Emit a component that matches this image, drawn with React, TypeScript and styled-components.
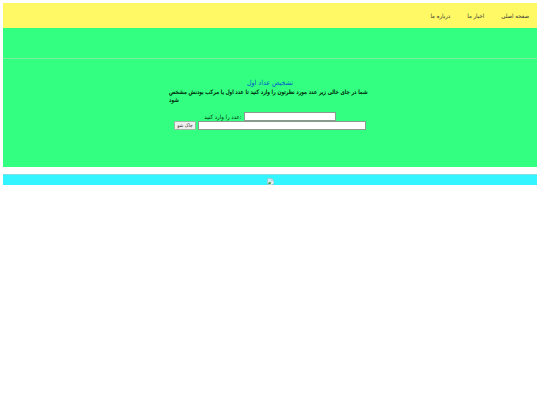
import React from "react";
import styled, { createGlobalStyle } from "styled-components";

const GlobalStyle = createGlobalStyle`
  * { box-sizing: border-box; }
  body {
    margin: 0;
    background: #fff;
    color: #000;
    font-family: "DejaVu Sans Condensed", "DejaVu Sans", sans-serif;
    font-size: 6px;
    line-height: 8px;
  }
`;

const Page = styled.div`
  padding: 3px;
`;

const Nav = styled.nav`
  display: flex;
  flex-direction: row-reverse;
  align-items: center;
  gap: 17px;
  height: 25px;
  padding: 0 8px;
  background: #fff966;
`;

const NavLink = styled.a`
  color: #333;
  text-decoration: none;
`;

const Banner = styled.header`
  height: 31px;
  background: #33ff80;
  border-bottom: 1px solid #80ee9c;
`;

const Main = styled.main`
  display: flex;
  flex-direction: column;
  align-items: center;
  padding: 20px 8px 37px;
  background: #33ff80;
`;

const Title = styled.h1`
  margin: 0;
  color: #0055cc;
  font-size: 7px;
  font-weight: 400;
  line-height: 9px;
`;

const Intro = styled.p`
  width: 204px;
  margin: 0 0 8px;
  padding-left: 1px;
  color: #003010;
  font-weight: 400;
  text-shadow: 0 0 0 #003010;
`;

const Form = styled.form`
  display: flex;
  flex-direction: column;
  align-items: center;
`;

const Row = styled.div`
  display: flex;
  align-items: center;
  gap: 2px;
`;

const Label = styled.label`
  color: #003010;
`;

const Field = styled.input<{ $wide?: boolean }>`
  width: ${({ $wide }) => ($wide ? 168 : 92)}px;
  height: 9px;
  padding: 0 1px;
  border: 1px solid #8a9a8e;
  border-radius: 0;
  background: #fff;
  font: inherit;
`;

const CheckButton = styled.button`
  width: 22px;
  height: 9px;
  padding: 0;
  border: 1px solid #9fb3a5;
  border-radius: 1px;
  background: #efefef;
  color: #333;
  font-family: inherit;
  font-size: 5px;
  line-height: 7px;
`;

const Footer = styled.footer`
  display: flex;
  justify-content: center;
  align-items: flex-end;
  height: 11px;
  margin-top: 7px;
  background: #33f5ff;
  border-top: 1px solid #80dfe2;
`;

const BrokenImage = () => (
  <svg width="7" height="7" viewBox="0 0 14 14" aria-hidden="true">
    <path d="M1 1h8l4 4v8H1z" fill="#d3e6f2" stroke="#a4b0b3" />
    <path d="M9 1v4h4z" fill="#fff" stroke="#a4b0b3" />
    <path d="M2 12c2-5 5-5 7-1l-2 1z" fill="#55a349" />
    <path d="M6 13l7-6v2l-4 4z" fill="#fff" />
  </svg>
);

const links = ["صفحه اصلی", "اخبار ما", "درباره ما"];

export default function App() {
  return (
    <>
      <GlobalStyle />
      <Page>
        <Nav>
          {links.map((text) => (
            <NavLink key={text} href="#">{text}</NavLink>
          ))}
        </Nav>
        <Banner />
        <Main>
          <Title>تشخیص عداد اول</Title>
          <Intro>
            شما در جای خالی زیر عدد مورد نظرتون را وارد کنید تا عدد اول یا مرکب بودنش مشخص شود
          </Intro>
          <Form onSubmit={(event) => event.preventDefault()}>
            <Row>
              <Label htmlFor="number">عدد را وارد کنید:</Label>
              <Field id="number" type="text" />
            </Row>
            <Row>
              <CheckButton type="submit">چاک شو</CheckButton>
              <Field $wide type="text" aria-label="نتیجه" readOnly />
            </Row>
          </Form>
        </Main>
        <Footer>
          <BrokenImage />
        </Footer>
      </Page>
    </>
  );
}
